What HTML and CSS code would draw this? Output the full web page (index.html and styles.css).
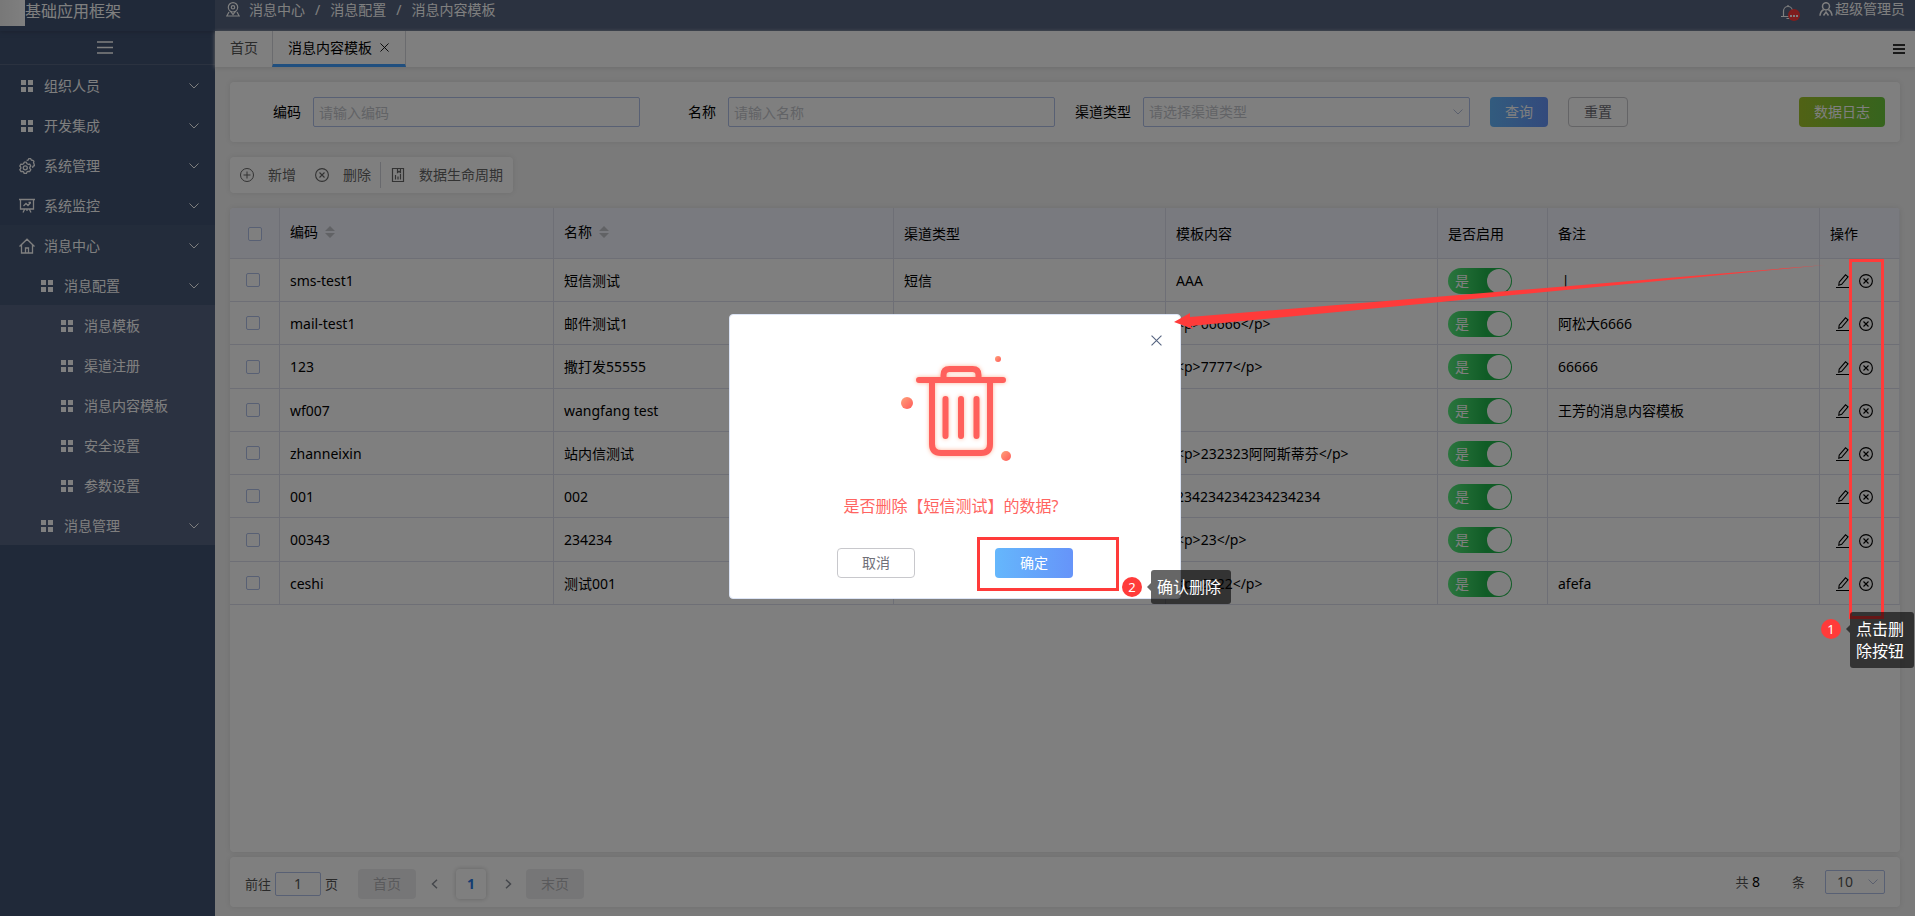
FILE: index.html
```html
<!DOCTYPE html>
<html lang="zh-CN">
<head>
<meta charset="utf-8">
<title>消息内容模板</title>
<link rel="stylesheet" href="styles.css">
</head>
<body>
<svg class="sprite" aria-hidden="true">
  <symbol id="i-grid" viewBox="0 0 16 16"><path fill="currentColor" d="M2 2h5v5H2zM9 2h5v5H9zM2 9h5v5H2zM9 9h5v5H9z"/></symbol>
  <symbol id="i-chev" viewBox="0 0 10 6"><path d="M.5.5 5 5 9.500 .5" fill="none" stroke="currentColor"/></symbol>
  <symbol id="i-gear" viewBox="0 0 16 16"><g fill="none" stroke="currentColor" stroke-width="1.300" stroke-linejoin="round"><path d="M5.200 4.200h2.200l.6 1.500 1.100.6 1.600-.2 1.100 1.900-1 1.200v1.200l1 1.200-1.100 1.900-1.600-.2-1.100.6-.6 1.500H5.200l-.6-1.500-1.100-.6-1.600.2L.8 11.600l1-1.200V9.200L.8 8l1.100-1.900 1.600.2 1.100-.6z"/><circle cx="6.300" cy="9.800" r="2"/><path d="M7.600 2.400 9 2.200l.7-1.500h2l.6 1.300 1.300.3 1.300 1-.4 1.500.6 1.200.3 1.600-1.500.8-.3 1.500"/></g></symbol>
  <symbol id="i-board" viewBox="0 0 16 16"><path d="M0 1.500h16M1.500 2v9h13V2M4.500 8l2.500-2.500 2 2L11.800 4.500M9.500 4.500H12M5.500 11.500 4 14.500M10.500 11.500 12 14.500M8 11v2" fill="none" stroke="currentColor" stroke-width="1.300"/></symbol>
  <symbol id="i-home" viewBox="0 0 16 16"><path d="M.5 8.500 8 1.200l7.500 7.300M2.500 7v8h11V7M6.500 15v-5h3v5" fill="none" stroke="currentColor" stroke-width="1.300"/></symbol>
  <symbol id="i-x" viewBox="0 0 10 10"><path d="M.5.5l9 9M9.500.5l-9 9" fill="none" stroke="currentColor"/></symbol>
  <symbol id="i-plus-circle" viewBox="0 0 14 14"><g fill="none" stroke="currentColor"><circle cx="7" cy="7" r="6.500"/><path d="M3.500 7h7M7 3.500v7"/></g></symbol>
  <symbol id="i-x-circle" viewBox="0 0 14 14"><g fill="none" stroke="currentColor" stroke-width="1.100"><circle cx="7" cy="7" r="6.400"/><path d="M4.500 4.500l5 5M9.500 4.500l-5 5"/></g></symbol>
  <symbol id="i-data" viewBox="0 0 14 14"><path d="M1.500.5h11v13h-11zM4.500 7v4.500M7 8.500v3M9.500 6v5.500M6.500.5v4L8 3.300l1.500 1.200v-4" fill="none" stroke="currentColor" stroke-width="1.200"/></symbol>
  <symbol id="i-edit" viewBox="0 0 14 14"><path d="M0 13.500h14M3.200 8.200 9.500.8 12 2.800 5.700 10.300 2.800 11.200z" fill="none" stroke="currentColor" stroke-width="1.100"/></symbol>
  <symbol id="i-sort" viewBox="0 0 10 12"><path fill="currentColor" d="M0 5h10L5 0zM0 7h10l-5 5z"/></symbol>
</svg>

<aside class="side">
  <div class="brand"><span class="logo"></span><span>基础应用框架</span></div>
  <button class="fold" aria-label="折叠菜单"><svg width="16" height="13" viewBox="0 0 16 13"><path d="M0 1h16M0 6.500h16M0 12h16" stroke="currentColor" stroke-width="1.300"/></svg></button>
  <nav>
    <a href="#" class="item"><svg class="ico"><use href="#i-grid"/></svg>组织人员<svg class="chev"><use href="#i-chev"/></svg></a>
    <a href="#" class="item"><svg class="ico"><use href="#i-grid"/></svg>开发集成<svg class="chev"><use href="#i-chev"/></svg></a>
    <a href="#" class="item"><svg class="ico"><use href="#i-gear"/></svg>系统管理<svg class="chev"><use href="#i-chev"/></svg></a>
    <a href="#" class="item"><svg class="ico"><use href="#i-board"/></svg>系统监控<svg class="chev"><use href="#i-chev"/></svg></a>
    <a href="#" class="item open"><svg class="ico"><use href="#i-home"/></svg>消息中心<svg class="chev"><use href="#i-chev"/></svg></a>
    <a href="#" class="item open l2"><svg class="ico"><use href="#i-grid"/></svg>消息配置<svg class="chev"><use href="#i-chev"/></svg></a>
    <a href="#" class="item sub l3"><svg class="ico"><use href="#i-grid"/></svg>消息模板</a>
    <a href="#" class="item sub l3"><svg class="ico"><use href="#i-grid"/></svg>渠道注册</a>
    <a href="#" class="item sub l3"><svg class="ico"><use href="#i-grid"/></svg>消息内容模板</a>
    <a href="#" class="item sub l3"><svg class="ico"><use href="#i-grid"/></svg>安全设置</a>
    <a href="#" class="item sub l3"><svg class="ico"><use href="#i-grid"/></svg>参数设置</a>
    <a href="#" class="item sub l2"><svg class="ico"><use href="#i-grid"/></svg>消息管理<svg class="chev"><use href="#i-chev"/></svg></a>
  </nav>
</aside>

<div class="page">
  <header class="top">
    <svg width="14" height="15" viewBox="0 0 14 15" fill="none" stroke="currentColor" stroke-width="1.200"><circle cx="7" cy="5.300" r="4.700"/><circle cx="7" cy="5.300" r="1.700"/><path d="M4.200 9 7 12.500 9.800 9M3 10 .8 14h12.400L11 10"/></svg>
    <div class="crumbs"><span>消息中心</span><span>/</span><span>消息配置</span><span>/</span><span>消息内容模板</span></div>
    <button class="bell" aria-label="通知"><svg width="14" height="14" viewBox="0 0 14 14" fill="none" stroke="currentColor" stroke-width="1.200"><path d="M0 11.500h14M2.500 11.500V6a4.500 4.500 0 0 1 9 0v5.500M7 0v1.500M5.500 13.500h3"/></svg><svg class="dot" viewBox="0 0 12 12"><circle cx="6" cy="6" r="6" fill="#ff3a3a"/><path d="M2 6h2v2H2zM5 6h2v2H5zM8 6h2v2H8z" fill="#fff"/></svg></button>
    <button class="user"><svg width="14" height="14" viewBox="0 0 14 14" fill="none" stroke="currentColor" stroke-width="1.500"><ellipse cx="7" cy="4.300" rx="3.500" ry="3.600"/><path d="M1 13.800c.2-3.300 1.500-5 3.700-6.300M13 13.800c-.2-3.300-1.500-5-3.700-6.300M4.500 13.500 7 10l2.500 3.500"/></svg>超级管理员</button>
  </header>
  <div class="tabs">
    <a href="#" class="tab">首页</a>
    <a href="#" class="tab on">消息内容模板<svg width="9" height="9"><use href="#i-x"/></svg></a>
    <button class="more" aria-label="更多"><svg width="12" height="10" viewBox="0 0 12 10"><path d="M0 1h12M0 5h12M0 9h12" stroke="currentColor" stroke-width="2"/></svg></button>
  </div>

  <main>
    <form class="card search">
      <div class="fields">
        <div class="field"><label for="code">编码</label><input id="code" class="box" placeholder="请输入编码"></div>
        <div class="field"><label for="name">名称</label><input id="name" class="box" placeholder="请输入名称"></div>
        <div class="field"><label for="chan">渠道类型</label><div class="pick"><select id="chan" class="box empty"><option>请选择渠道类型</option></select><svg class="chev"><use href="#i-chev"/></svg></div></div>
      </div>
      <button type="button" class="btn blue">查询</button>
      <button type="button" class="btn line">重置</button>
      <button type="button" class="btn green">数据日志</button>
    </form>

    <div class="card tools">
      <button><svg width="14" height="14"><use href="#i-plus-circle"/></svg>新增</button>
      <button><svg width="14" height="14"><use href="#i-x-circle"/></svg>删除</button>
      <button class="last"><svg width="14" height="14"><use href="#i-data"/></svg>数据生命周期</button>
    </div>

    <div class="card grid">
      <table>
        <colgroup><col class="c1"><col class="c2"><col class="c3"><col class="c4"><col class="c4"><col class="c6"><col class="c4"><col class="c8"></colgroup>
        <thead><tr><th class="ck"><input type="checkbox" aria-label="全选"></th><th class="sort">编码 <svg width="10" height="12"><use href="#i-sort"/></svg></th><th class="sort">名称 <svg width="10" height="12"><use href="#i-sort"/></svg></th><th>渠道类型</th><th>模板内容</th><th>是否启用</th><th>备注</th><th>操作</th></tr></thead>
        <tbody>
          <tr><td class="ck"><input type="checkbox" aria-label="sms-test1"></td><td>sms-test1</td><td>短信测试</td><td>短信</td><td>AAA</td><td><label class="switch"><input type="checkbox" checked>是</label></td><td class="pre"> |</td><td class="ops"><button aria-label="编辑"><svg><use href="#i-edit"/></svg></button><button aria-label="删除"><svg><use href="#i-x-circle"/></svg></button></td></tr>
          <tr><td class="ck"><input type="checkbox" aria-label="mail-test1"></td><td>mail-test1</td><td>邮件测试1</td><td></td><td>&lt;p&gt;66666&lt;/p&gt;</td><td><label class="switch"><input type="checkbox" checked>是</label></td><td>阿松大6666</td><td class="ops"><button aria-label="编辑"><svg><use href="#i-edit"/></svg></button><button aria-label="删除"><svg><use href="#i-x-circle"/></svg></button></td></tr>
          <tr><td class="ck"><input type="checkbox" aria-label="123"></td><td>123</td><td>撒打发55555</td><td></td><td>&lt;p&gt;7777&lt;/p&gt;</td><td><label class="switch"><input type="checkbox" checked>是</label></td><td>66666</td><td class="ops"><button aria-label="编辑"><svg><use href="#i-edit"/></svg></button><button aria-label="删除"><svg><use href="#i-x-circle"/></svg></button></td></tr>
          <tr><td class="ck"><input type="checkbox" aria-label="wf007"></td><td>wf007</td><td>wangfang test</td><td></td><td></td><td><label class="switch"><input type="checkbox" checked>是</label></td><td>王芳的消息内容模板</td><td class="ops"><button aria-label="编辑"><svg><use href="#i-edit"/></svg></button><button aria-label="删除"><svg><use href="#i-x-circle"/></svg></button></td></tr>
          <tr><td class="ck"><input type="checkbox" aria-label="zhanneixin"></td><td>zhanneixin</td><td>站内信测试</td><td></td><td>&lt;p&gt;232323阿阿斯蒂芬&lt;/p&gt;</td><td><label class="switch"><input type="checkbox" checked>是</label></td><td></td><td class="ops"><button aria-label="编辑"><svg><use href="#i-edit"/></svg></button><button aria-label="删除"><svg><use href="#i-x-circle"/></svg></button></td></tr>
          <tr><td class="ck"><input type="checkbox" aria-label="001"></td><td>001</td><td>002</td><td></td><td>234234234234234234</td><td><label class="switch"><input type="checkbox" checked>是</label></td><td></td><td class="ops"><button aria-label="编辑"><svg><use href="#i-edit"/></svg></button><button aria-label="删除"><svg><use href="#i-x-circle"/></svg></button></td></tr>
          <tr><td class="ck"><input type="checkbox" aria-label="00343"></td><td>00343</td><td>234234</td><td></td><td>&lt;p&gt;23&lt;/p&gt;</td><td><label class="switch"><input type="checkbox" checked>是</label></td><td></td><td class="ops"><button aria-label="编辑"><svg><use href="#i-edit"/></svg></button><button aria-label="删除"><svg><use href="#i-x-circle"/></svg></button></td></tr>
          <tr><td class="ck"><input type="checkbox" aria-label="ceshi"></td><td>ceshi</td><td>测试001</td><td></td><td>&lt;p&gt;2222&lt;/p&gt;</td><td><label class="switch"><input type="checkbox" checked>是</label></td><td>afefa</td><td class="ops"><button aria-label="编辑"><svg><use href="#i-edit"/></svg></button><button aria-label="删除"><svg><use href="#i-x-circle"/></svg></button></td></tr>
        </tbody>
      </table>
    </div>

    <div class="card pager">
      <label class="goto">前往<input class="box" value="1">页</label>
      <button class="edge" disabled>首页</button>
      <button class="step" aria-label="上一页"><svg width="7" height="10" viewBox="0 0 7 10"><path d="M6 .7 1.500 5 6 9.300" fill="none" stroke="currentColor" stroke-width="1.500"/></svg></button>
      <button class="num">1</button>
      <button class="step" aria-label="下一页"><svg width="7" height="10" viewBox="0 0 7 10"><path d="M1 .7 5.500 5 1 9.300" fill="none" stroke="currentColor" stroke-width="1.500"/></svg></button>
      <button class="edge" disabled>末页</button>
      <span class="total">共 <b>8</b></span>
      <span class="unit">条</span>
      <div class="pick size"><select class="box" aria-label="每页条数"><option>10</option></select><svg class="chev"><use href="#i-chev"/></svg></div>
    </div>
  </main>
</div>

<div class="mask">
  <div class="modal" role="dialog" aria-labelledby="ask">
    <button class="close" aria-label="关闭"><svg width="11" height="11"><use href="#i-x"/></svg></button>
    <svg class="bin" width="112" height="112" viewBox="0 0 112 112">
      <defs><linearGradient id="ball" x1="0" y1="0" x2="1" y2="1"><stop offset="0" stop-color="#ffa27a"/><stop offset="1" stop-color="#ff5a5a"/></linearGradient></defs>
      <g class="glow" fill="none" stroke="#ff605c" stroke-width="6" stroke-linecap="round">
        <path d="M18 27h84M42.500 26v-4q0-6 6-6h23q6 0 6 6v4M31 28v63q0 9 9 9h40q9 0 9-9V28"/>
        <path d="M44.500 46v37M60 46v37M75.500 46v37"/>
      </g>
      <g fill="url(#ball)"><circle cx="6" cy="50" r="6"/><circle cx="97" cy="6" r="3"/><circle cx="105" cy="103" r="5"/></g>
    </svg>
    <p id="ask">是否删除【短信测试】的数据?</p>
    <div class="acts"><button class="btn line wide">取消</button><button class="btn blue wide">确定</button></div>
    <div class="frame ok"></div>
    <div class="note two"><span class="step-no">2</span><span class="tip">确认删除</span></div>
  </div>
</div>

<div class="frame col"></div>
<div class="note one"><span class="step-no">1</span><span class="tip">点击删<br>除按钮</span></div>
<svg class="arrow" width="652" height="70" viewBox="0 0 652 70"><path fill="#ff3b3a" d="M0 62 16 53 16 57 651 5 17 66 19 69z"/></svg>
</body>
</html>
```
FILE: styles.css
```css
* { box-sizing: border-box; }
body {
  margin: 0; height: 100vh; display: flex; overflow: hidden; position: relative;
  font: 14px/20px "Noto Sans", "Noto Sans CJK SC", sans-serif; color: #000; background: #f4f4f4;
}
button, input, select { font: inherit; color: inherit; margin: 0; }
button { border: 0; background: none; padding: 0; white-space: nowrap; }
a { color: inherit; text-decoration: none; }
.sprite { position: absolute; width: 0; height: 0; }

.side { width: 215px; flex: none; background: #405272; color: #fff; }
.brand { height: 31px; display: flex; align-items: flex-start; font-size: 16px; line-height: 22px; box-shadow: 0 1px 4px #36445f; }
.logo { width: 25px; height: 26px; background: linear-gradient(90deg, #f0f0f0, #fff); }
.fold { display: flex; width: 100%; height: 34px; align-items: center; justify-content: center; border-bottom: 1px solid #566480; padding-right: 5px; }
.item { display: flex; align-items: center; height: 40px; padding: 1px 16px 0 19px; }
.item .ico { width: 16px; height: 16px; margin-right: 9px; }
.item .chev { margin-left: auto; }
.chev { width: 10px; height: 6px; flex: none; }
.item.l2 { padding-left: 39px; }
.item.l3 { padding-left: 59px; }
.item.open { background: #465876; }
.item.sub { background: #576482; }

.page { flex: 1; min-width: 0; display: flex; flex-direction: column; }
.top { height: 31px; background: #566480; color: #fff; display: flex; align-items: flex-start; padding: 0 10px 0 11px; }
.top > svg { margin-top: 2px; }
.crumbs { display: flex; gap: 10px; margin-left: 9px; }
.bell { margin: 5px 24px 0 auto; position: relative; height: 14px; display: flex; }
.dot { position: absolute; left: 7px; top: 4px; width: 12px; height: 12px; }
.user { display: flex; align-items: center; gap: 2px; height: 18px; line-height: 18px; }
.tabs { height: 36px; background: #fff; display: flex; box-shadow: 0 1px 4px #d8d8d8; color: #555; position: relative; }
.tab { padding: 7px 14px 6px 15px; line-height: 20px; }
.tab.on { color: #000; border-bottom: 3px solid #409eff; border-left: 1px solid #d4d6dc; border-right: 1px solid #d4d6dc; display: flex; align-items: center; gap: 8px; padding: 0 16px 0 15px; }
.more { margin-left: auto; padding-right: 10px; color: #333; }

main { flex: 1; min-height: 0; display: flex; flex-direction: column; padding: 15px 15px 9px; }
.card { background: #fff; border-radius: 4px; box-shadow: 0 0 5px #dcdcdc; }
.search { display: flex; align-items: center; height: 60px; padding-right: 15px; flex: none; }
.fields { flex: 0 1 1240px; display: grid; grid-template-columns: repeat(3, 1fr); gap: 5px; margin-right: 20px; }
.field { display: flex; align-items: center; }
.field label { width: 83px; padding-right: 12px; text-align: right; white-space: nowrap; flex: none; }
.box { border: 1px solid #b0c0e8; border-radius: 2px; background: #fff; height: 30px; width: 100%; min-width: 0; padding: 0 5px; outline: 0; appearance: none; }
.box::placeholder { color: #c4c6cc; opacity: 1; }
.box.empty { color: #c4c6cc; }
.pick { position: relative; flex: 1; }
.pick .chev { position: absolute; right: 7px; top: 50%; margin-top: -3px; color: #b4bfda; }
.btn { height: 30px; border-radius: 4px; padding: 0 15px; color: #fff; }
.blue { background: linear-gradient(90deg, #65b7fc, #6694f9); }
.line { border: 1px solid #c8c8cc; color: #707078; background: #fff; margin-left: 20px; }
.green { background: linear-gradient(90deg, #a2c52a, #6cc83c); margin-left: auto; }

.tools { align-self: flex-start; display: flex; align-items: center; height: 36px; margin: 15px 0; padding: 0 10px; gap: 19px; color: #666; flex: none; }
.tools button { display: flex; align-items: center; gap: 14px; height: 26px; }
.tools .last { border-left: 1px solid #d0d3da; padding-left: 10px; margin-left: -10px; }

.grid { flex: 1; min-height: 0; overflow: hidden; }
table { border-collapse: separate; border-spacing: 0; table-layout: fixed; width: 100%; }
.c1 { width: 50px; } .c2 { width: 274px; } .c3 { width: 340px; } .c4 { width: 272px; } .c6 { width: 110px; } .c8 { width: 80px; }
th, td { text-align: left; font-weight: 400; padding: 0 10px; border-right: 1px solid #dcdfec; border-bottom: 1px solid #dcdfec; white-space: nowrap; }
th { height: 51px; background: #f2f4ff; padding-top: 2px; }
th.sort { padding-top: 0; padding-bottom: 2px; }
th.sort svg { color: #c2c4ca; margin-left: 3px; vertical-align: -1px; }
th:last-child, td:last-child { border-right-color: #e8eaf2; }
td { height: 43px; padding-top: 1px; }
tr:nth-child(4n+3) td { height: 44px; }
.ck { padding: 0 0 0 16px; }
th.ck { padding: 2px 0 0 18px; }
.ck input { appearance: none; display: block; width: 14px; height: 14px; border: 1px solid #b0c0e8; border-radius: 2px; background: #fff; }
.pre { white-space: pre; }
.switch { display: block; position: relative; width: 64px; height: 26px; border-radius: 13px; background: linear-gradient(90deg, #56ea7c, #20b84c 60%); color: #fff; line-height: 26px; padding-left: 7px; }
.switch input { position: absolute; right: 1px; top: 1px; width: 24px; height: 24px; appearance: none; background: #fff; border-radius: 12px; }
td.ops { padding: 0 0 0 16px; }
.ops button { width: 14px; height: 14px; margin-right: 9px; vertical-align: middle; }
.ops svg { width: 14px; height: 14px; display: block; }

.pager { display: flex; align-items: center; height: 50px; margin-top: 5px; padding: 0 15px; color: #555; flex: none; }
.goto { display: flex; align-items: center; gap: 4px; font-size: 13px; padding-top: 3px; }
.goto .box { width: 46px; height: 24px; text-align: center; font-size: 14px; }
.edge { width: 58px; height: 30px; border-radius: 4px; background: #ededee; color: #b4b4b8; margin: 4px 0 0 20px; }
.step { width: 36px; height: 30px; color: #8a8f98; padding-top: 4px; }
.num { width: 30px; height: 30px; border-radius: 4px; color: #2a78e4; font-weight: 700; box-shadow: 0 0 5px #c8c8c8; margin: 4px 4px 0; }
.step + .edge { margin-left: 0; }
.total { margin-left: auto; font-size: 13px; }
.total b { color: #000; font-weight: 400; font-size: 14px; }
.unit { margin: 0 20px 0 32px; font-size: 13px; }
.size { flex: none; width: 60px; }
.size .box { height: 24px; padding-left: 11px; display: block; }

.mask { position: absolute; inset: 0; background: rgba(0, 0, 0, .5); display: flex; align-items: center; justify-content: center; padding: 0 5px 3px 0; }
.modal { position: relative; width: 452px; background: #fff; border: 1px solid #dce4f5; border-radius: 4px; padding: 38px 0 20px; display: flex; flex-direction: column; align-items: center; }
.close { position: absolute; right: 18px; top: 20px; color: #566480; }
.close svg { display: block; }
.bin { margin-left: 4px; }
.glow { filter: drop-shadow(0 0 2px #ffb79c); }
#ask { margin: 29px 0 30px; padding-right: 8px; font-size: 16px; line-height: 24px; color: #ff6461; }
.acts { display: flex; gap: 80px; }
.wide { width: 78px; margin: 0; padding: 0; }
.frame { position: absolute; border: 3px solid #ff3b3a; }
.ok { left: 247px; top: 222px; width: 142px; height: 54px; }
.col { right: 31px; top: 259px; width: 35px; height: 360px; }
.note { position: absolute; display: flex; align-items: flex-start; gap: 9px; color: #fff; font-size: 16px; line-height: 22px; }
.step-no { width: 20px; height: 20px; border-radius: 10px; background: #ff3b3a; font-size: 13px; line-height: 20px; text-align: center; margin-top: 7px; }
.tip { background: rgba(0, 0, 0, .6); border-radius: 3px; padding: 6px 10px 6px 6px; position: relative; white-space: nowrap; }
.tip::before { content: ""; position: absolute; left: -4px; top: 13px; border: 4px solid transparent; border-left: 0; border-right-color: rgba(0, 0, 0, .6); }
.two { left: 392px; top: 255px; }
.one { right: 1px; top: 612px; }
.arrow { position: absolute; right: 89px; top: 260px; }
```
